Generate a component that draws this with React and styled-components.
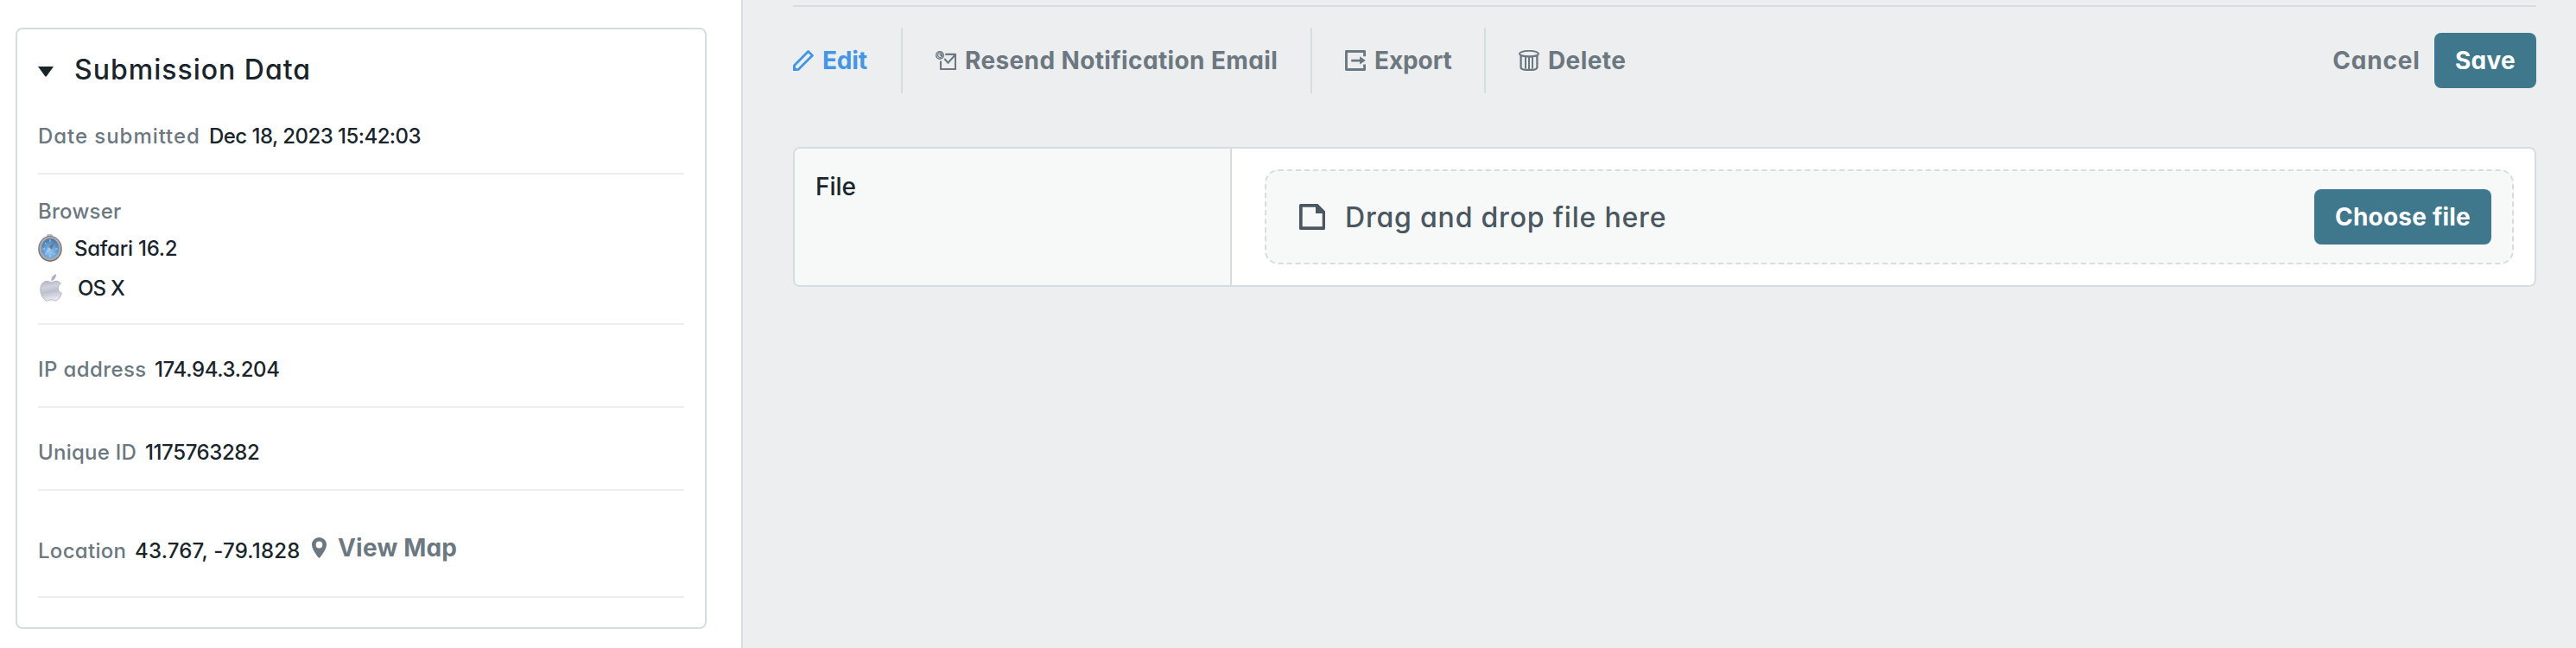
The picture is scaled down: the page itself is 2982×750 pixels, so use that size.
import styled, { createGlobalStyle } from "styled-components";

const GlobalStyle = createGlobalStyle`
    * {
        box-sizing: border-box;
    }
    body {
        margin: 0;
        background-color: #edeef0;
        font-family: Inter, "Open Sans", sans-serif;
        font-feature-settings: "cv11";
        color: #1a252b;
    }
`;

const Page = styled.div`
    display: flex;
    height: 750px;
    overflow: hidden;
`;

const Sidebar = styled.aside`
    width: 860px;
    flex-shrink: 0;
    padding: 32px 40px 22px 18px;
    background-color: #fff;
    border-right: 2px solid #dadcde;
`;

const Card = styled.section`
    height: 696px;
    padding: 0 24px;
    border: 2px solid #d5dde1;
    border-radius: 8px;
`;

const CardHeader = styled.header`
    display: flex;
    align-items: center;
    gap: 24px;
    height: 92px;
`;

const CardTitle = styled.h2`
    margin: 0;
    font-size: 32px;
    font-weight: 500;
    letter-spacing: 1px;
    white-space: nowrap;
`;

const Caret = styled.svg`
    margin-top: 6px;
`;

const Row = styled.div`
    display: flex;
    align-items: center;
    height: ${(props) => props.$height}px;
    padding: ${(props) => props.$padding};
    border-bottom: 2px solid #eeeeee;
`;

const BrowserBlock = styled.div`
    height: 174px;
    padding: 20px 0 16px;
    border-bottom: 2px solid #eeeeee;
`;

const BrowserLine = styled.div`
    display: flex;
    align-items: center;
    height: ${(props) => props.$height}px;
    gap: ${(props) => props.$gap || 0}px;
`;

const Label = styled.span`
    width: ${(props) => (props.$width ? `${props.$width}px` : "auto")};
    flex-shrink: 0;
    color: #6c7880;
    font-size: 24px;
    font-weight: 500;
    letter-spacing: ${(props) => props.$track || 0}px;
    white-space: nowrap;
`;

const Value = styled(Label)`
    color: #1a252b;
`;

const MapLink = styled.a`
    display: flex;
    align-items: center;
    gap: 13px;
    margin-bottom: 6px;
    color: #6c7880;
    font-size: 28px;
    font-weight: 700;
    letter-spacing: 0.2px;
    white-space: nowrap;
`;

const Main = styled.main`
    flex: 1;
    padding: 6px 46px 0 58px;
`;

const Toolbar = styled.div`
    display: flex;
    align-items: center;
    justify-content: space-between;
    height: 102px;
    margin-bottom: 62px;
    padding-top: 24px;
    border-top: 2px solid #d5dde1;
`;

const Actions = styled.div`
    display: flex;
`;

const Action = styled.button`
    display: flex;
    align-items: center;
    gap: 10px;
    width: ${(props) => props.$width}px;
    height: 76px;
    padding: 0 0 0 38px;
    background: none;
    border: 0;
    border-right: 2px solid #d5dde1;
    color: ${(props) => (props.$active ? "#4296e8" : "#6c7880")};
    font: inherit;
    font-size: 28px;
    font-weight: 700;
    letter-spacing: ${(props) => props.$track || 0}px;
    white-space: nowrap;

    &:first-child {
        padding-left: 0;
    }
    &:last-child {
        border-right: 0;
    }
`;

const SaveGroup = styled.div`
    display: flex;
    align-items: center;
    gap: 16px;
`;

const Button = styled.button`
    width: ${(props) => props.$width}px;
    height: 64px;
    padding: 0;
    border: 0;
    border-radius: 8px;
    background-color: #3f788c;
    color: #fff;
    font: inherit;
    font-size: 28px;
    font-weight: 700;
    letter-spacing: ${(props) => props.$track || 0}px;
    white-space: nowrap;
`;

const CancelButton = styled(Button)`
    background: none;
    color: #6c7880;
`;

const Field = styled.div`
    display: flex;
    height: 162px;
    background-color: #fff;
    border: 2px solid #d5dde1;
    border-radius: 8px;
    overflow: hidden;
`;

const FieldLabel = styled.div`
    width: 506px;
    padding: 27px 0 0 24px;
    background-color: #f6f9f8;
    border-right: 2px solid #d5dde1;
    font-size: 28px;
    line-height: 34px;
    font-weight: 500;
`;

const FieldBody = styled.div`
    flex: 1;
    padding: 24px 24px 24px 38px;
`;

const DropZone = styled.div`
    display: flex;
    align-items: center;
    height: 110px;
    padding: 0 24px 0 38px;
    background-color: #f6f9f8;
    border: 2px dashed #d5dde1;
    border-radius: 16px;
`;

const DropText = styled.span`
    flex: 1;
    padding-left: 23px;
    color: #4a5761;
    font-size: 32px;
    font-weight: 500;
    letter-spacing: 0.8px;
    white-space: nowrap;
`;

const CaretIcon = () => (
    <Caret width="18" height="12" viewBox="0 0 18 12">
        <path d="M0 0h18L10 11q-1 1.4-2 0z" fill="#1a252b" />
    </Caret>
);

const SafariIcon = () => (
    <svg width="28" height="32" viewBox="0 0 28 32">
        <defs>
            <radialGradient id="safari" cx="50%" cy="70%" r="65%">
                <stop offset="0" stopColor="#8fc9f5" />
                <stop offset="0.6" stopColor="#5f9dd6" />
                <stop offset="1" stopColor="#4a7aab" />
            </radialGradient>
        </defs>
        <rect x="10" y="0" width="7" height="4" rx="2" fill="#b5b7ba" />
        <ellipse cx="14" cy="17" rx="13.8" ry="15" fill="#77777c" />
        <ellipse cx="14" cy="16.5" rx="12.5" ry="13.8" fill="#a9a9ab" />
        <ellipse cx="14" cy="16.5" rx="10.2" ry="11.4" fill="url(#safari)" />
        <path d="M14 6v3M14 24v3M5 17h3M20 17h3M8 10l2 2M18 22l2 2M8 24l2-2" stroke="#a9d3f4" strokeWidth="1" />
        <path d="M19.5 9l-3.8 9-3.4-3.2z" fill="#6d7687" />
        <path d="M8.7 23l3.6-8.2 3.4 3.2z" fill="#a6c9e5" />
    </svg>
);

const AppleIcon = () => (
    <svg width="28" height="32" viewBox="0 0 28 32">
        <defs>
            <linearGradient id="apple" x1="0" y1="0" x2="0.2" y2="1">
                <stop offset="0" stopColor="#adb1bf" />
                <stop offset="0.35" stopColor="#d0d3de" />
                <stop offset="0.6" stopColor="#bcc0cd" />
                <stop offset="1" stopColor="#e6e8ee" />
            </linearGradient>
        </defs>
        <path d="M15.3 8.2C15 4.5 17.2 1.3 21 .3c.2 3.9-2 7-5.7 7.9z" fill="#adb1bf" />
        <path
            d="M15.5 9.7c1.8 0 3-1.4 5.4-1.4 2.2 0 4.2 1 5.5 2.9-4.7 2.7-4 9.3.9 11-1.4 4.3-3.9 8.5-6.9 8.8-1.8.1-2.7-1.1-4.9-1.1s-3.2 1.1-5 1.1c-4 0-7.7-7-7.7-13 0-5.8 3.6-9.5 7.5-9.5 2.3 0 3.9 1.2 5.2 1.2z"
            fill="url(#apple)"
            stroke="#acb0be"
            strokeWidth="0.9"
        />
    </svg>
);

const PinIcon = () => (
    <svg width="17" height="24" viewBox="0 0 17 24">
        <path
            d="M8.5 0C3.8 0 0 3.7 0 8.3 0 13 4 18.5 7.3 23q1.2 1.5 2.4 0C13 18.5 17 13 17 8.3 17 3.7 13.2 0 8.5 0zm0 4.5a3.8 4 0 0 1 0 8 3.8 4 0 0 1 0-8z"
            fill="currentColor"
            fillRule="evenodd"
        />
    </svg>
);

const EditIcon = () => (
    <svg width="24" height="24" viewBox="0 0 24 24">
        <path
            d="M17.6 1.6l4.8 4.6L6.1 22.4 1.3 22.6 1.5 17.7z"
            fill="none"
            stroke="currentColor"
            strokeWidth="2.8"
            strokeLinejoin="round"
        />
        <path d="M.4 17.5L6.5 23.5 1.5 24Q.2 24 .2 22.5z" fill="currentColor" />
        <path d="M4.4 17.7l2.2 2.2-1.2 1.2-2.7-2.2z" fill="#edeef0" />
    </svg>
);

const ResendIcon = () => (
    <svg width="24" height="24" viewBox="0 0 24 24" fill="none" stroke="currentColor">
        <circle cx="5" cy="6" r="4.3" strokeWidth="1.5" />
        <path d="M7.3 4.4A2.6 2.6 0 1 0 7 7.8" strokeWidth="1.2" />
        <path d="M4 5.2L8 4v4.4z" fill="currentColor" stroke="none" />
        <path d="M11.3 4.9H23V22H6V12.5" strokeWidth="2.1" strokeLinejoin="round" />
        <path d="M10.3 10l4.2 4.7 8-9" strokeWidth="2.1" />
    </svg>
);

const ExportIcon = () => (
    <svg width="24" height="24" viewBox="0 0 24 24">
        <path d="M22.6 7.3V1.5H1.5v21h21.1v-6" fill="none" stroke="currentColor" strokeWidth="2.9" strokeLinejoin="round" />
        <path d="M7.2 10.7h9.9V7.2l6.7 4.8-6.7 4.4v-3H7.2z" fill="currentColor" />
    </svg>
);

const DeleteIcon = () => (
    <svg width="24" height="24" viewBox="0 0 24 24" fill="none" stroke="currentColor">
        <ellipse cx="12" cy="4.2" rx="11" ry="3.3" strokeWidth="1.9" />
        <path d="M2.6 6.5V20c0 4 18.8 4 18.8 0V6.5" strokeWidth="2.3" />
        <path d="M1.5 5.5c4 2.5 17 2.5 21 0" strokeWidth="2" />
        <path d="M8 8v13.5M12 8v14M16 8v13.5" strokeWidth="2" />
    </svg>
);

const FileIcon = () => (
    <svg width="30" height="30" viewBox="0 0 30 30">
        <path
            d="M1.5 0H21.5L30 8.5V28.5Q30 30 28.5 30H1.5Q0 30 0 28.5V1.5Q0 0 1.5 0zM3.7 3.7V26.3H26.7V11H19V3.7z"
            fill="#4a5761"
            fillRule="evenodd"
        />
    </svg>
);

const App = () => {
    return (
        <Page>
            <GlobalStyle />
            <Sidebar>
                <Card>
                    <CardHeader>
                        <CaretIcon />
                        <CardTitle>Submission Data</CardTitle>
                    </CardHeader>
                    <Row $height={76} $padding="0 0 12px">
                        <Label $width={198} $track={0.95}>Date submitted</Label>
                        <Value $track={-0.55}>Dec 18, 2023 15:42:03</Value>
                    </Row>
                    <BrowserBlock>
                        <BrowserLine $height={44}>
                            <Label $track={0.25}>Browser</Label>
                        </BrowserLine>
                        <BrowserLine $height={42} $gap={14}>
                            <SafariIcon />
                            <Value $track={-0.25}>Safari 16.2</Value>
                        </BrowserLine>
                        <BrowserLine $height={50} $gap={18}>
                            <AppleIcon />
                            <Value $track={-0.8}>OS X</Value>
                        </BrowserLine>
                    </BrowserBlock>
                    <Row $height={96} $padding="8px 0 0">
                        <Label $width={135} $track={0.4}>IP address</Label>
                        <Value $track={-0.35}>174.94.3.204</Value>
                    </Row>
                    <Row $height={96} $padding="8px 0 0">
                        <Label $width={124} $track={0.25}>Unique ID</Label>
                        <Value $track={-0.4}>1175763282</Value>
                    </Row>
                    <Row $height={124} $padding="16px 0 0">
                        <Label $width={112} $track={0.3}>Location</Label>
                        <Value $width={205} $track={0.2}>43.767, -79.1828</Value>
                        <MapLink>
                            <PinIcon />
                            View Map
                        </MapLink>
                    </Row>
                </Card>
            </Sidebar>
            <Main>
                <Toolbar>
                    <Actions>
                        <Action $active $width={127} $track={-0.2}>
                            <EditIcon />
                            Edit
                        </Action>
                        <Action $width={474} $track={0.38}>
                            <ResendIcon />
                            Resend Notification Email
                        </Action>
                        <Action $width={201} $track={-0.1}>
                            <ExportIcon />
                            Export
                        </Action>
                        <Action $width={180} $track={0.4}>
                            <DeleteIcon />
                            Delete
                        </Action>
                    </Actions>
                    <SaveGroup>
                        <CancelButton $width={102} $track={0.8}>Cancel</CancelButton>
                        <Button $width={118} $track={0.3}>Save</Button>
                    </SaveGroup>
                </Toolbar>
                <Field>
                    <FieldLabel>File</FieldLabel>
                    <FieldBody>
                        <DropZone>
                            <FileIcon />
                            <DropText>Drag and drop file here</DropText>
                            <Button $width={205} $track={0.2}>Choose file</Button>
                        </DropZone>
                    </FieldBody>
                </Field>
            </Main>
        </Page>
    );
};

export default App;
